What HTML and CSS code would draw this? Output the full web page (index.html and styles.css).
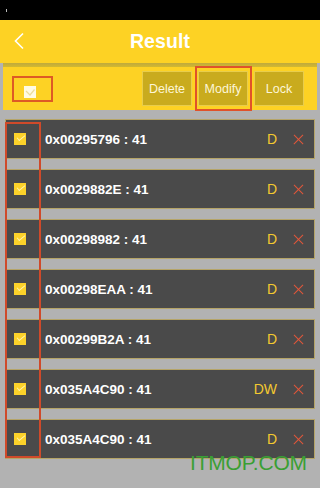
FILE: index.html
```html
<!DOCTYPE html>
<html>
<head>
<meta charset="utf-8">
<link rel="stylesheet" href="styles.css">
</head>
<body>
<div class="status"><span class="signal"></span></div>
<header class="header">
  <svg class="back" width="12" height="18" viewBox="0 0 12 18"><path d="M10 1.5 L2.5 9 L10 16.5" fill="none" stroke="#fff" stroke-width="1.6"/></svg>
  <h1 class="title">Result</h1>
</header>
<div class="shadow"></div>
<div class="toolbar">
  <div class="all-wrap"><span class="all-check"><svg width="12" height="12" viewBox="0 0 12 12"><path d="M2 5 L6 9 L10.5 3.5" fill="none" stroke="#ecdc9c" stroke-width="1.2"/></svg></span></div>
  <div class="buttons">
    <button class="btn">Delete</button>
    <button class="btn btn-marked">Modify</button>
    <button class="btn">Lock</button>
  </div>
</div>
<main class="list">
  <div class="row"><span class="check"></span><span class="addr">0x00295796 : 41</span><span class="mode">D</span><span class="del"></span></div>
  <div class="row"><span class="check"></span><span class="addr">0x0029882E : 41</span><span class="mode">D</span><span class="del"></span></div>
  <div class="row"><span class="check"></span><span class="addr">0x00298982 : 41</span><span class="mode">D</span><span class="del"></span></div>
  <div class="row"><span class="check"></span><span class="addr">0x00298EAA : 41</span><span class="mode">D</span><span class="del"></span></div>
  <div class="row"><span class="check"></span><span class="addr">0x00299B2A : 41</span><span class="mode">D</span><span class="del"></span></div>
  <div class="row"><span class="check"></span><span class="addr">0x035A4C90 : 41</span><span class="mode">DW</span><span class="del"></span></div>
  <div class="row"><span class="check"></span><span class="addr">0x035A4C90 : 41</span><span class="mode">D</span><span class="del"></span></div>
  <div class="col-mark"></div>
</main>
<div class="watermark">ITMOP.COM</div>
</body>
</html>
```
FILE: styles.css
```css
html, body {
  margin: 0;
  padding: 0;
}
body {
  width: 320px;
  height: 488px;
  overflow: hidden;
  background: #b2b2b2;
  font-family: "Liberation Sans", Arial, sans-serif;
  position: relative;
}
.status {
  height: 20px;
  background: #000;
  position: relative;
}
.signal {
  position: absolute;
  left: 6px;
  top: 9px;
  width: 1px;
  height: 3px;
  background: #bbb;
}
.header {
  height: 43px;
  background: #fdd224;
  display: flex;
  align-items: center;
  justify-content: center;
  position: relative;
}
.back {
  position: absolute;
  left: 13px;
  top: 12px;
}
.title {
  margin: 0;
  color: #fff;
  font-size: 19.5px;
  font-weight: bold;
  letter-spacing: 0.1px;
}
.shadow {
  height: 4px;
  margin: 0 3px;
  background: linear-gradient(#bfaa3c, #d2b930);
}
.toolbar {
  margin: 0 3px;
  height: 43px;
  background: #fdd224;
  display: flex;
  align-items: center;
  justify-content: space-between;
}
.all-wrap {
  margin-left: 9px;
  width: 37px;
  height: 22px;
  border: 2px solid #de5a25;
  position: relative;
}
.all-check {
  position: absolute;
  left: 10px;
  top: 8px;
  width: 12px;
  height: 12px;
  background: #fffbe4;
  display: flex;
}
.buttons {
  display: flex;
  gap: 6px;
  margin-right: 13px;
}
.btn {
  width: 50px;
  height: 35px;
  background: #c9ab1e;
  border: 1px solid #e8cd4c;
  color: #fdf6d8;
  font-family: "Liberation Sans", Arial, sans-serif;
  font-size: 12.5px;
  padding: 0;
  position: relative;
}
.btn-marked::after {
  content: "";
  position: absolute;
  left: -4px;
  right: -5px;
  top: -6px;
  bottom: -6px;
  border: 2px solid #e0522a;
}
.list {
  margin-top: 9px;
  display: flex;
  flex-direction: column;
  gap: 10px;
  position: relative;
}
.row {
  margin: 0 5px;
  height: 38px;
  background: #4a4a4a;
  border: 1px solid #b5a467;
  display: flex;
  align-items: center;
}
.check {
  width: 12px;
  height: 12px;
  margin-left: 8px;
  background: #fcd22a;
  position: relative;
}
.check::after {
  content: "";
  position: absolute;
  left: 3px;
  top: 2px;
  width: 7px;
  height: 3px;
  border-left: 1px solid #fff2b0;
  border-bottom: 1px solid #fff2b0;
  transform: rotate(-40deg);
}
.addr {
  margin-left: 19px;
  color: #fff;
  font-weight: bold;
  font-size: 13.5px;
  flex: 1;
}
.mode {
  color: #f4c930;
  font-size: 14px;
}
.del {
  width: 10px;
  height: 10px;
  margin-left: 16px;
  margin-right: 11px;
  position: relative;
}
.del::before, .del::after {
  content: "";
  position: absolute;
  left: -1px;
  top: 4.5px;
  width: 13px;
  height: 1.2px;
  background: #e2573a;
  transform: rotate(45deg);
}
.del::after {
  transform: rotate(-45deg);
}
.col-mark {
  position: absolute;
  left: 5px;
  top: 3px;
  width: 32px;
  height: 332px;
  border: 2px solid #cf4a2a;
}
.watermark {
  position: absolute;
  left: 190px;
  top: 451px;
  color: #3a9f34;
  font-size: 21px;
  letter-spacing: -0.2px;
}
```
